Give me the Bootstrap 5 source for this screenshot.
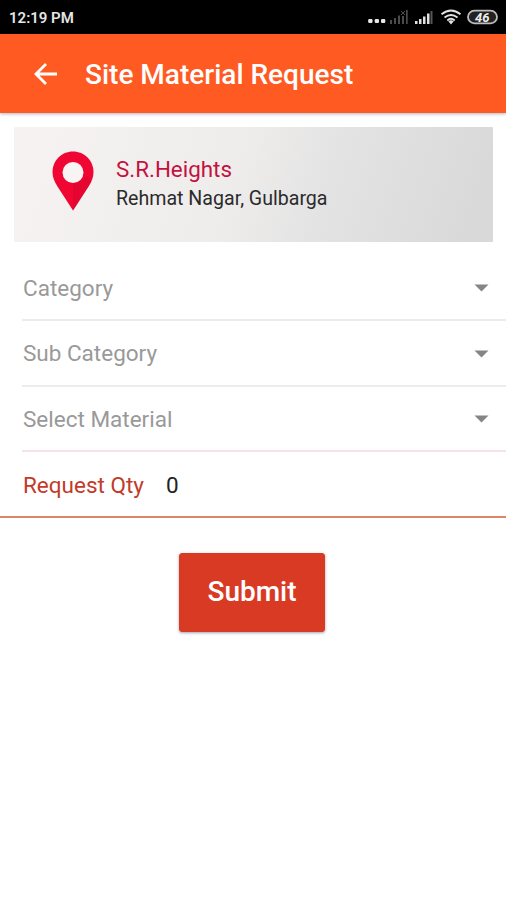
<!DOCTYPE html>
<html lang="en">
<head>
<meta charset="utf-8">
<meta name="viewport" content="width=device-width, initial-scale=1">
<title>Site Material Request</title>
<link href="https://cdn.jsdelivr.net/npm/bootstrap@5.3.0/dist/css/bootstrap.min.css" rel="stylesheet">
<style>
  body { font-family: Roboto, "Liberation Sans", sans-serif; line-height: 1; min-height: 100vh; }
  svg { display: block; flex: none; }
  .status-bar { height: 34px; background: #000; color: #e6e6e6; padding: 2px 8px 0 9px; }
  .clock { font-size: 15px; font-weight: 600; }
  .app-bar { height: 79px; background: #ff5a22; padding: 0 33px; box-shadow: 0 1px 3px rgba(60,70,110,.4); }
  .app-title { font-size: 28px; font-weight: 500; margin-left: 27px; padding-top: 2px; }
  .site-card { margin: 14px 13px 0 14px; height: 115px; padding: 0 0 3px 38px; border: 0; border-radius: 1px;
    background: linear-gradient(108deg, #f5f2f1 8%, #eeedec 45%, #e4e3e3 65%, #d9d9d9 95%); }
  .site-text { margin-left: 22px; }
  .site-name { font-size: 22.4px; color: #c4123f; margin-bottom: 9px; }
  .site-place { font-size: 19.600px; color: #2b2b2b; }
  .fields { margin-top: 14px; }
  .field { height: 65.4px; margin-left: 22px; padding: 1px 17px 0 1px; border-bottom: 2px solid #eeebee; font-size: 22.5px; color: #999; }
  .field-pink { border-bottom-color: #f6e2e7; }
  .field-qty { margin-left: 0; padding-left: 23px; padding-top: 2px; border-bottom-color: #dd8469; color: #c23a2a; }
  .qty { color: #222; margin-left: 22px; }
  .btn-submit { --bs-btn-color: #fff; --bs-btn-bg: #d93a24; --bs-btn-hover-bg: #c5321e; --bs-btn-hover-color: #fff;
    --bs-btn-border-color: #d93a24; --bs-btn-border-radius: 3px; width: 146px; height: 79px; margin: 35px 2px 0 0;
    font-size: 28px; font-weight: 500; line-height: 1; box-shadow: 0 1px 3px rgba(40,50,80,.45); }
</style>
<script src="https://cdn.jsdelivr.net/npm/bootstrap@5.3.0/dist/js/bootstrap.bundle.min.js"></script>
</head>
<body class="bg-white d-flex flex-column">
  <header>
    <div class="status-bar d-flex align-items-center justify-content-between">
      <span class="clock">12:19 PM</span>
      <svg width="132" height="22" viewBox="0 0 132 22" aria-hidden="true">
        <g fill="#e8e8e8"><rect x="2.200" y="12" width="4.300" height="4" rx="1.200"/><rect x="8.700" y="12" width="4.300" height="4" rx="1.200"/><rect x="15" y="12" width="4.300" height="4" rx="1.200"/></g>
        <g fill="#4c4c4c"><path d="M24 13h2v4h-2zM28 11h2v6h-2zM32 8.500h2v8.500h-2zM36 9h2v8h-2zM40 3h1.700v14h-1.700z"/><path d="M35 4l4 4m0-4l-4 4" stroke="#4c4c4c"/></g>
        <path d="M49 14h2.500v3H49zM53 12h2.500v5H53zM57 9.500h2.500v7.500H57zM61 6.500h2.500V17H61z" fill="#e0e0e0"/>
        <path d="M64.500 4h2v13h-2z" fill="#555"/>
        <g fill="none" stroke="#e2e2e2" stroke-width="1.900"><path d="M75.500 7.300Q85-.2 94.500 7.300M78.500 10.500Q85 5.300 91.500 10.500M81.300 13.400Q85 10.300 88.700 13.400"/></g>
        <path d="M82.300 14.200Q85 12.200 87.700 14.200L85 17.600z" fill="#e2e2e2"/>
        <rect x="102" y="3.700" width="29" height="12.600" rx="6.300" fill="#222" stroke="#bdbdbd" stroke-width="1.800"/>
        <text x="116.300" y="14.500" text-anchor="middle" font-size="13" font-weight="700" font-style="italic" fill="#eee">46</text>
      </svg>
    </div>
    <nav class="app-bar navbar flex-nowrap justify-content-start" aria-label="Page">
      <svg width="25" height="24" viewBox="0 0 25 24" role="img" aria-label="Back">
        <path d="M13 2L3 12l10 10M3 12h21" fill="none" stroke="#fff" stroke-width="2.800"/>
      </svg>
      <h1 class="app-title text-white mb-0 text-nowrap">Site Material Request</h1>
    </nav>
  </header>
  <main class="d-flex flex-column">
    <section class="site-card card flex-row align-items-center">
      <svg width="42" height="60" viewBox="0 0 42 60" class="mb-1" aria-hidden="true">
        <path fill="#ef0632" fill-rule="evenodd" d="M21 .5C9.500.5.5 9.700.5 21c0 5.500 2 9.700 5 14.500L21 59.500l15.500-24c3-4.800 5-9 5-14.500C41.500 9.700 32.500.5 21 .5z"/>
        <path fill="#d9042e" d="M21 32L36 25l3.500 5.500L36.500 35.500 21 59.500z" opacity=".5"/>
        <circle cx="21" cy="21.500" r="10.500" fill="#f7f4f3"/>
      </svg>
      <div class="site-text text-nowrap">
        <div class="site-name">S.R.Heights</div>
        <div class="site-place">Rehmat Nagar, Gulbarga</div>
      </div>
    </section>
    <form class="fields d-flex flex-column">
      <div class="field d-flex align-items-center justify-content-between"><span>Category</span>
        <svg width="15" height="8" viewBox="0 0 15 8"><path d="M.5.500h14l-7 7z" fill="#858585"/></svg></div>
      <div class="field d-flex align-items-center justify-content-between"><span>Sub Category</span>
        <svg width="15" height="8" viewBox="0 0 15 8"><path d="M.5.500h14l-7 7z" fill="#858585"/></svg></div>
      <div class="field field-pink d-flex align-items-center justify-content-between"><span>Select Material</span>
        <svg width="15" height="8" viewBox="0 0 15 8"><path d="M.5.500h14l-7 7z" fill="#858585"/></svg></div>
      <div class="field field-qty d-flex align-items-center"><span>Request Qty</span><span class="qty">0</span></div>
      <button type="button" class="btn btn-submit align-self-center">Submit</button>
    </form>
  </main>
</body>
</html>
